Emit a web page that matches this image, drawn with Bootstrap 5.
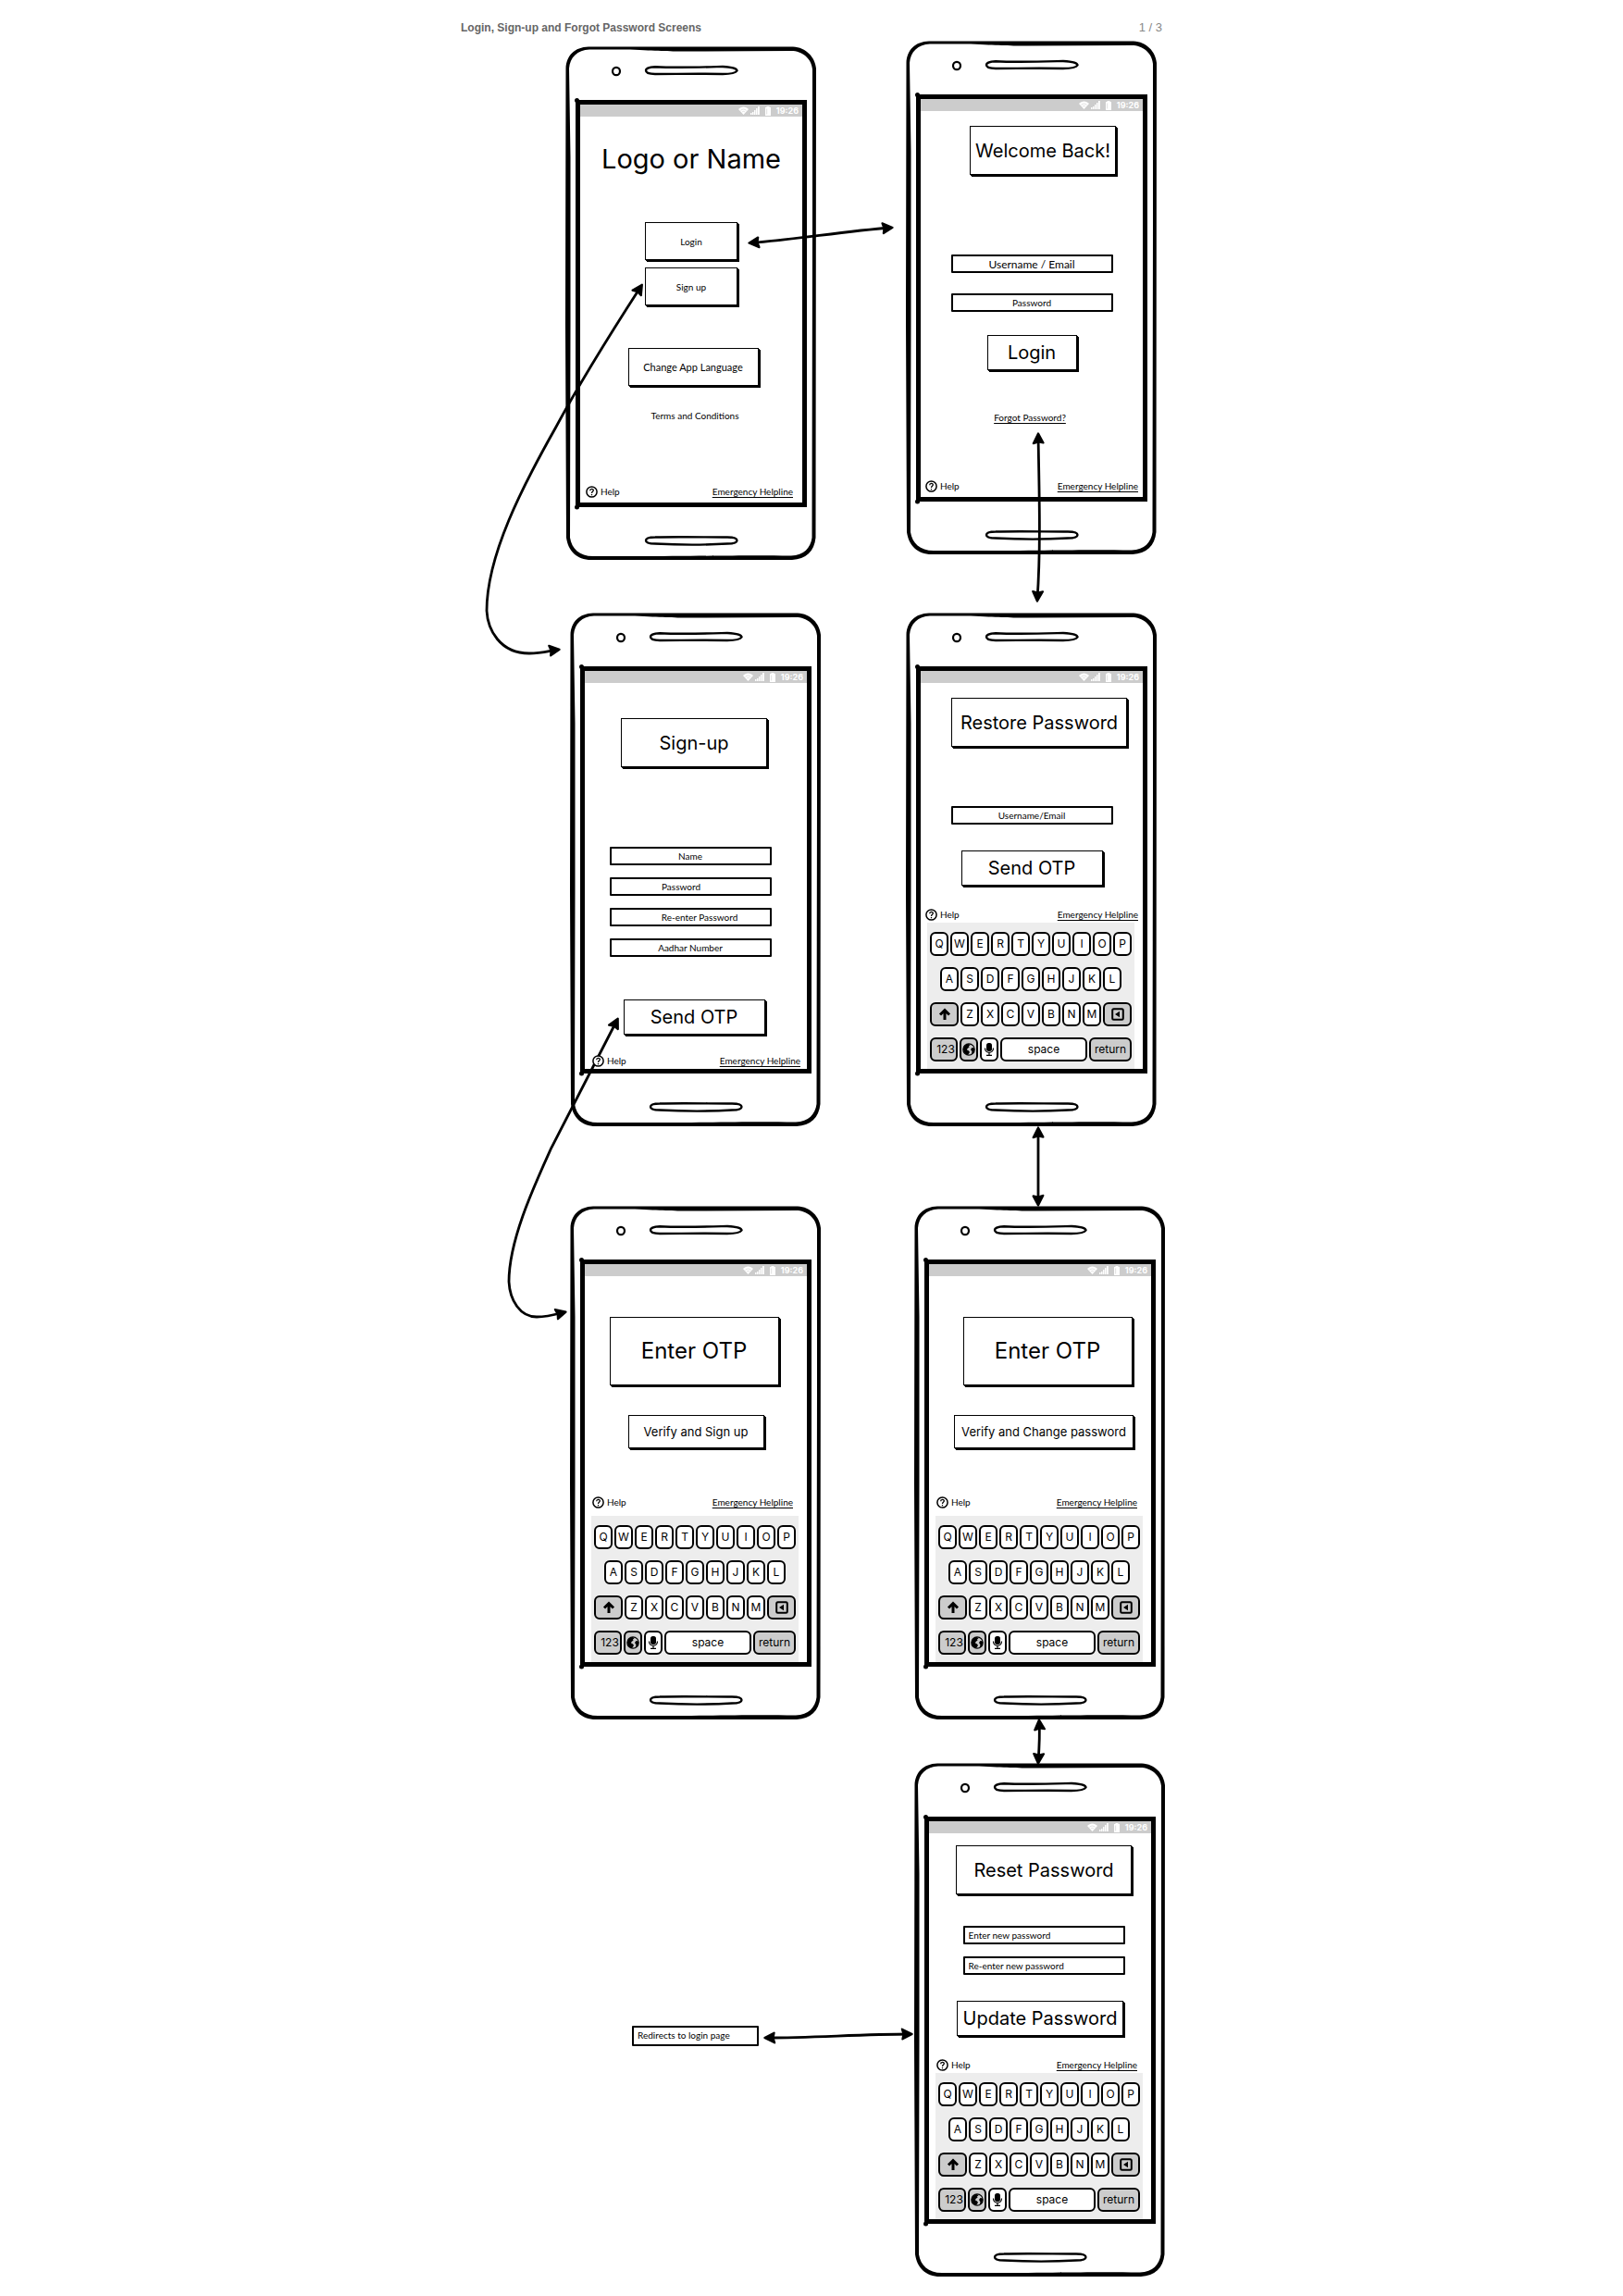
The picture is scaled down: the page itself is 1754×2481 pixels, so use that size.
<!DOCTYPE html>
<html lang="en">
<head>
<meta charset="utf-8">
<meta name="viewport" content="width=device-width, initial-scale=1">
<title>Login, Sign-up and Forgot Password Screens</title>
<link href="https://cdn.jsdelivr.net/npm/bootstrap@5.3.0/dist/css/bootstrap.min.css" rel="stylesheet">
<style>
  body { background: #fff; color: #000; font-family: Inter, "Open Sans", sans-serif; }
  .board { max-width: 758px; }
  .board-head { height: 44px; padding-top: 21px; font: 700 12px/18px "Liberation Sans", Arial, sans-serif; color: #666; }
  .page-count { font-weight: 400; font-size: 13px; color: #888; }

  /* Columns of phones */
  .flow-left { padding-left: 113px; padding-top: 6px; }
  .flow-right { margin-right: -3px; }
  .shift-phone { margin-left: 5px; }
  .shift-phone-wide { margin-left: 9px; }
  .space-47 { margin-top: 47px; }
  .space-57 { margin-top: 57px; }
  .space-63 { margin-top: 63px; }
  .space-86 { margin-top: 86px; }
  .space-331 { margin-top: 331px; }

  /* Phone */
  .phone { width: 271px; height: 555px; padding: 58px 0 0 11px; }
  .phone-frame { z-index: -1; }
  .screen { width: 250px; height: 440px; border: 5px solid #000; background: #fff; }
  .status { height: 13px; background: #ccc; color: #fff; padding-right: 4px; gap: 2px; font: 700 9px/13px Inter, sans-serif; }

  /* Boxes */
  .box { border: 1px solid #000; background: #fff; box-shadow: 1px 1px 0 #000, 2px 2px 0 #000; color: #000; padding: 0; margin-bottom: 0; display: flex; align-items: center; justify-content: center; white-space: nowrap; font-size: 20px; font-weight: 400; line-height: 24px; }
  .box-sm { width: 100px; height: 41px; font: 10px/14px Lato, sans-serif; }
  .box-md { width: 141px; height: 41px; font: 11px/14px Lato, sans-serif; }
  .box-title { width: 158px; height: 53px; }
  .box-title-wide { width: 190px; height: 53px; }
  .box-otp { width: 183px; height: 74px; font-size: 24px; }
  .box-login { width: 97px; height: 38px; }
  .box-send { width: 153px; height: 38px; }
  .box-update { width: 180px; height: 38px; }
  .box-verify { width: 147px; height: 36px; font-size: 13px; }
  .box-verify-wide { width: 194px; height: 36px; font-size: 13px; }
  .logo-title { font-size: 29px; line-height: 32px; font-weight: 400; margin-bottom: 0; }

  .field { width: 175px; height: 20px; border: 2px solid #000; border-radius: 1px; background: #fff; color: #000; padding: 0 4px; font: 10px/14px Lato, sans-serif; }
  .field::placeholder { color: #000; opacity: 1; }
  .field-lg { font-size: 12px; }
  .field-left { padding-right: 24px; }
  .field-right { padding-left: 24px; }
  .field-group { margin-right: 12px; }
  .note-box { width: 137px; height: 22px; margin-left: 72px; border: 2px solid #000; border-radius: 1px; padding-left: 4px; font: 10px/16px Lato, sans-serif; }

  .tiny { font: 10px/14px Lato, sans-serif; color: #000; }
  a.tiny { text-decoration: underline; text-underline-offset: 2px; }
  .foot { padding: 0 5px; }
  .foot-inset { padding: 0 15px 0 8px; }
  .foot-mid { padding: 0 10px 0 6px; }
  .foot-low { padding: 0 7px 0 8px; }
  .foot-help { gap: 3px; }
  .end-5 { margin-bottom: 5px; }
  .end-2 { margin-bottom: 2px; }

  .top-8 { margin-top: 8px; } .top-13 { margin-top: 13px; } .top-16 { margin-top: 16px; }
  .top-22 { margin-top: 22px; } .top-25 { margin-top: 25px; } .top-28 { margin-top: 28px; }
  .top-30 { margin-top: 30px; } .top-32 { margin-top: 32px; } .top-34 { margin-top: 34px; }
  .top-38 { margin-top: 38px; } .top-44 { margin-top: 44px; } .top-46 { margin-top: 46px; }
  .top-52 { margin-top: 52px; } .top-64 { margin-top: 64px; } .top-86 { margin-top: 86px; }

  /* Keyboard */
  .keys { width: 224px; height: 158px; margin-left: 7px; padding-top: 10px; gap: 12px; background: #ededed; }
  .keys > div { gap: 2px; }
  .key { width: 20px; height: 26px; padding: 0; border: 2px solid #000; border-radius: 6px; background: #fff; color: #000; font: 12px/20px Inter, sans-serif; display: flex; align-items: center; justify-content: center; }
  .key-gray { background: #ccc; }
  .key-wide { width: 31px; }
  .key-num { width: 30px; padding-left: 4px; }
  .key-space { width: 94px; }
  .key-return { width: 46px; }
</style>
<script src="https://cdn.jsdelivr.net/npm/bootstrap@5.3.0/dist/js/bootstrap.bundle.min.js"></script>
</head>
<body>

<svg class="d-none" aria-hidden="true">
  <symbol id="frame" viewBox="0 0 271 555">
    <path fill-rule="evenodd" d="M.5 24C1 10 10 1 25 .5L246 .5C260 1 270 12 271 24L270.500 531C269 546 260 554 245 555L28 555C12 555 3 545 1 531L0 300Z
      M4 24C5 12 13 4 26 3.500L70 3.500C100 5 110 5.500 130 5.500L244 5C256 5 266 13 267 25L267 200L266.500 531C265 542 258 550 244 550.500C180 549.500 150 551.500 30 551C15 551 7 543 5 531L5.500 300L5.500 120Z"/>
    <ellipse cx="55" cy="27" rx="4" ry="4.200" fill="#fff" stroke="#000" stroke-width="2.200"/>
    <path d="M87 26C87 23 92 22.500 97 22.200C120 23.500 150 22.500 170 22C180 22.500 185.500 24 185.500 26.500C184 29 178 30 170 30C145 29.500 120 30 97 30C91 30 87 29 87 26Z" fill="#fff" stroke="#000" stroke-width="2.400"/>
    <path d="M87 534C87 531.500 91 530.500 97 530.500C120 529.800 150 530.500 175 530.500C182 530.500 185.500 531.500 185.500 534C185.500 536.500 182 537.500 175 537.500C150 539 125 539 97 537.500C91 537.500 87 536.500 87 534Z" fill="#fff" stroke="#000" stroke-width="2.400"/>
    <circle cx="12.500" cy="58.500" r="2.500"/><circle cx="12.500" cy="498" r="2.500"/>
  </symbol>
  <symbol id="wifi" viewBox="0 0 11 9"><path fill="#fff" d="M0 3C3-.5 8-.5 11 3L5.500 9Z"/><path d="M2.500 4.300C4.500 2.600 6.500 2.600 8.500 4.300M4 6C5 5.200 6 5.200 7 6" stroke="#ccc" stroke-width=".6" fill="none"/></symbol>
  <symbol id="signal" viewBox="0 0 10 9"><path fill="#fff" d="M0 7h1.500v2H0zM2 6h1.500v3H2zM4 4h1.500v5H4zM6 2h1.500v7H6zM8 0h1.800v9H8z"/></symbol>
  <symbol id="battery" viewBox="0 0 6 10"><path fill="#fff" d="M1.500 0h3v1H6v9H0V1h1.500z"/><path d="M1.500 2.500h.6v6h-.6z" fill="#ccc"/></symbol>
  <symbol id="help" viewBox="0 0 13 13"><circle cx="6.500" cy="6.500" r="5.600" fill="#fff" stroke="#000" stroke-width="1.500"/><path d="M4.700 5.200C4.700 2.700 8.400 2.800 8.300 5C8.200 6.300 6.500 6.200 6.500 7.900M6.500 9v1.200" fill="none" stroke="#000" stroke-width="1.300"/></symbol>
  <symbol id="shift" viewBox="0 0 14 14"><path d="M7 13V3M2 7.500L7 2.500L12 7.500" fill="none" stroke="#000" stroke-width="3"/></symbol>
  <symbol id="erase" viewBox="0 0 14 14"><rect x="1.200" y="1.200" width="11.600" height="11.600" rx="1.500" fill="none" stroke="#000" stroke-width="2"/><path d="M9 3.800V10.200L4 7Z"/></symbol>
  <symbol id="globe" viewBox="0 0 14 14"><circle cx="7" cy="7" r="6.200" fill="#ccc" stroke="#000" stroke-width="1.200"/><path d="M1 6C1.500 3 4 1 7 1L8.500 2.500L7 3.200L7.500 4.500L5.500 6L5 7.500L7 8.500L8 10L6 13C3 12.500 1 10 1 6ZM9 7L10.500 5L13 5.500C13.500 8.500 12 11.500 9.500 12.500L10.500 9.500Z"/></symbol>
  <symbol id="mic" viewBox="0 0 12 14"><rect x="3" y="0" width="6" height="9" rx="2.500"/><path d="M1.500 5.500C1.500 12 10.500 12 10.500 5.500M6 10.500V13M3 13.300h6" fill="none" stroke="#000" stroke-width="1.200"/></symbol>
</svg>

<template id="statusTpl">
  <div class="status d-flex align-items-center justify-content-end w-100">
    <svg width="11" height="9"><use href="#wifi"/></svg><svg width="10" height="9"><use href="#signal"/></svg><svg class="mx-1" width="6" height="10"><use href="#battery"/></svg><span>19:26</span>
  </div>
</template>

<main class="board mx-auto position-relative">
  <header class="board-head d-flex justify-content-between"><span>Login, Sign-up and Forgot Password Screens</span><span class="page-count">1 / 3</span></header>

  <div class="d-flex justify-content-between align-items-start">
    <div class="flow-left">
      <section class="phone position-relative">
        <div class="screen d-flex flex-column align-items-center">
          <h1 class="logo-title top-30">Logo or Name</h1>
          <button class="box box-sm top-52">Login</button>
          <button class="box box-sm top-8">Sign up</button>
          <button class="box box-md top-46 ms-1">Change App Language</button>
          <span class="tiny top-25 ms-2">Terms and Conditions</span>
          <div class="foot-mid end-5 mt-auto w-100 d-flex justify-content-between" data-foot></div>
        </div>
      </section>

      <section class="phone position-relative shift-phone space-57">
        <div class="screen d-flex flex-column align-items-center">
          <h2 class="box box-title top-38 me-1">Sign-up</h2>
          <div class="field-group d-flex flex-column top-86">
            <input class="field text-center" placeholder="Name" aria-label="Name">
            <input class="field field-left text-center top-13" type="password" placeholder="Password" aria-label="Password">
            <input class="field field-right text-center top-13" type="password" placeholder="Re-enter Password" aria-label="Re-enter Password">
            <input class="field text-center top-13" placeholder="Aadhar Number" aria-label="Aadhar Number">
          </div>
          <button class="box box-send top-46 me-1">Send OTP</button>
          <div class="foot-low end-2 mt-auto w-100 d-flex justify-content-between" data-foot></div>
        </div>
      </section>

      <section class="phone position-relative shift-phone space-86">
        <div class="screen d-flex flex-column align-items-center">
          <h2 class="box box-otp top-44 me-1">Enter OTP</h2>
          <button class="box box-verify top-32">Verify and Sign up</button>
          <div class="foot-inset mb-2 mt-auto w-100 d-flex justify-content-between" data-foot></div>
          <div class="keys align-self-start d-flex flex-column align-items-center" data-keys></div>
        </div>
      </section>

      <p class="note-box space-331">Redirects to login page</p>
    </div>

    <div class="flow-right">
      <section class="phone position-relative">
        <div class="screen d-flex flex-column align-items-center">
          <h2 class="box box-title top-16 ms-4">Welcome Back!</h2>
          <input class="field field-lg text-center top-86" placeholder="Username / Email" aria-label="Username or Email">
          <input class="field text-center top-22" type="password" placeholder="Password" aria-label="Password">
          <button class="box box-login top-25">Login</button>
          <a class="tiny top-44 me-1" href="#restore">Forgot Password?</a>
          <div class="foot end-5 mt-auto w-100 d-flex justify-content-between" data-foot></div>
        </div>
      </section>

      <section class="phone position-relative space-63" id="restore">
        <div class="screen d-flex flex-column align-items-center">
          <h2 class="box box-title-wide top-16 ms-3">Restore Password</h2>
          <input class="field text-center top-64" placeholder="Username/Email" aria-label="Username or Email">
          <button class="box box-send top-28">Send OTP</button>
          <div class="foot end-2 mt-auto w-100 d-flex justify-content-between" data-foot></div>
          <div class="keys align-self-start d-flex flex-column align-items-center" data-keys></div>
        </div>
      </section>

      <section class="phone position-relative shift-phone-wide space-86">
        <div class="screen d-flex flex-column align-items-center">
          <h2 class="box box-otp top-44 ms-3">Enter OTP</h2>
          <button class="box box-verify-wide top-32 ms-2">Verify and Change password</button>
          <div class="foot-inset mb-2 mt-auto w-100 d-flex justify-content-between" data-foot></div>
          <div class="keys align-self-start d-flex flex-column align-items-center" data-keys></div>
        </div>
      </section>

      <section class="phone position-relative shift-phone-wide space-47">
        <div class="screen d-flex flex-column align-items-center">
          <h2 class="box box-title-wide top-13 ms-2">Reset Password</h2>
          <input class="field top-34 ms-2" type="password" placeholder="Enter new password" aria-label="Enter new password">
          <input class="field top-13 ms-2" type="password" placeholder="Re-enter new password" aria-label="Re-enter new password">
          <button class="box box-update top-28">Update Password</button>
          <div class="foot-inset end-2 mt-auto w-100 d-flex justify-content-between" data-foot></div>
          <div class="keys align-self-start d-flex flex-column align-items-center" data-keys></div>
        </div>
      </section>
    </div>
  </div>

  <!-- Connectors between the screens -->
  <svg class="position-absolute top-0 start-0 pe-none" width="764" height="2470" viewBox="498 0 764 2470" aria-hidden="true">
    <defs>
      <marker id="tip" markerUnits="userSpaceOnUse" markerWidth="14" markerHeight="14" refX="10" refY="6.500" orient="auto-start-reverse" viewBox="0 0 13 13">
        <path d="M1.500 1.500L11.500 6.500L2 11.500L3 6.500Z" stroke="#000" stroke-width="2" stroke-linejoin="round"/>
      </marker>
    </defs>
    <g fill="none" stroke="#000" stroke-width="2.800">
      <path marker-start="url(#tip)" marker-end="url(#tip)" d="M811 262.500C860 259 910 250 963 246"/>
      <path marker-start="url(#tip)" marker-end="url(#tip)" d="M693 309C660 360 622 422 600 463C565 525 526 600 526 660C527 680 540 706 572 706C585 706 595 703 603 702"/>
      <path marker-start="url(#tip)" marker-end="url(#tip)" d="M667 1102L596 1240C577 1282 550 1340 550 1385C551 1405 562 1423 580 1423C592 1423 602 1420 610 1418"/>
      <path marker-start="url(#tip)" marker-end="url(#tip)" d="M1122 470C1123 530 1125 590 1121 648"/>
      <path marker-start="url(#tip)" marker-end="url(#tip)" d="M1122 1220V1301"/>
      <path marker-start="url(#tip)" marker-end="url(#tip)" d="M1123 1860C1124 1875 1123 1890 1122 1904"/>
      <path marker-start="url(#tip)" marker-end="url(#tip)" d="M828 2202C880 2202 930 2198 984 2198"/>
    </g>
  </svg>
</main>

<script>
  const key = (label, cls = '') => `<button class="key ${cls}">${label}</button>`;
  const icon = (id, name, w, cls) => `<button class="key ${cls}" aria-label="${name}"><svg class="flex-shrink-0" width="${w}" height="14"><use href="#${id}"/></svg></button>`;
  const row = html => `<div class="d-flex">${html}</div>`;
  const letters = s => [...s].map(c => key(c)).join('');
  const keyboard =
    row(letters('QWERTYUIOP')) +
    row(letters('ASDFGHJKL')) +
    row(icon('shift', 'Shift', 14, 'key-gray key-wide') + letters('ZXCVBNM') + icon('erase', 'Backspace', 14, 'key-gray key-wide')) +
    row(key('123', 'key-gray key-num') + icon('globe', 'Language', 14, 'key-gray') + icon('mic', 'Voice', 12, '') + key('space', 'key-space') + key('return', 'key-gray key-return'));

  document.querySelectorAll('.phone').forEach(p => {
    p.insertAdjacentHTML('afterbegin', '<svg class="phone-frame position-absolute top-0 start-0" width="271" height="555" aria-hidden="true"><use href="#frame"/></svg>');
    p.querySelector('.screen').prepend(document.getElementById('statusTpl').content.cloneNode(true));
  });
  document.querySelectorAll('[data-foot]').forEach(f => {
    f.innerHTML = '<span class="tiny foot-help d-flex align-items-center"><svg class="position-relative z-1" width="13" height="13" aria-hidden="true"><use href="#help"/></svg>Help</span><a class="tiny" href="#helpline">Emergency Helpline</a>';
  });
  document.querySelectorAll('[data-keys]').forEach(k => { k.innerHTML = keyboard; });
</script>
</body>
</html>
